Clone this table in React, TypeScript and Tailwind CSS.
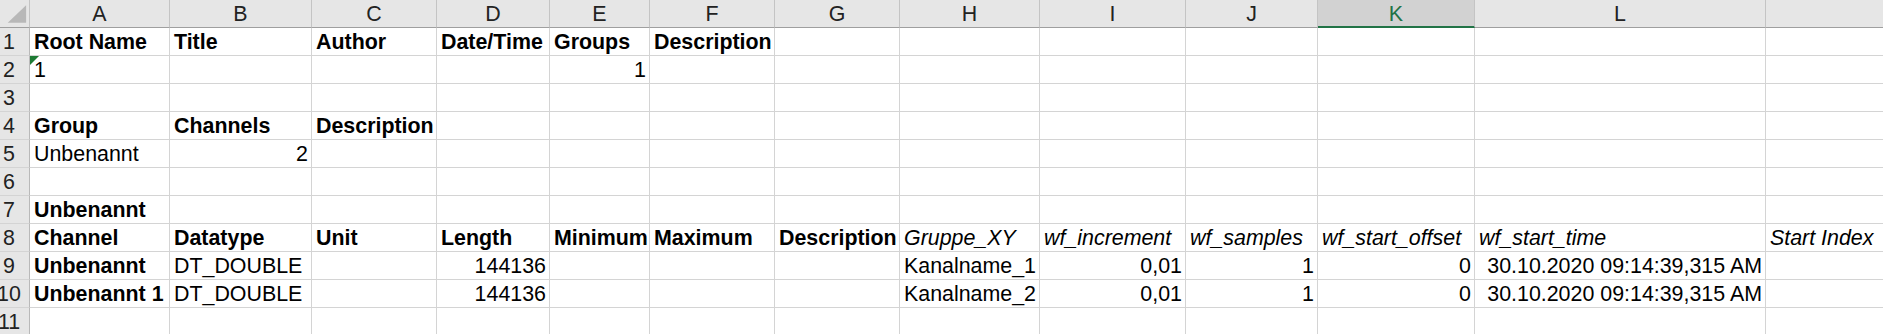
import React from "react";

type Cell = { v: string; b?: boolean; i?: boolean; r?: boolean; err?: boolean };

const letters = ["A", "B", "C", "D", "E", "F", "G", "H", "I", "J", "K", "L", "M"];
const widths = [140, 142, 125, 113, 100, 125, 125, 140, 146, 132, 157, 291, 400];

// row data, keyed by column index
const rows: Record<number, Cell>[] = [
  {
    0: { v: "Root Name", b: true },
    1: { v: "Title", b: true },
    2: { v: "Author", b: true },
    3: { v: "Date/Time", b: true },
    4: { v: "Groups", b: true },
    5: { v: "Description", b: true },
  },
  { 0: { v: "1", err: true }, 4: { v: "1", r: true } },
  {},
  {
    0: { v: "Group", b: true },
    1: { v: "Channels", b: true },
    2: { v: "Description", b: true },
  },
  { 0: { v: "Unbenannt" }, 1: { v: "2", r: true } },
  {},
  { 0: { v: "Unbenannt", b: true } },
  {
    0: { v: "Channel", b: true },
    1: { v: "Datatype", b: true },
    2: { v: "Unit", b: true },
    3: { v: "Length", b: true },
    4: { v: "Minimum", b: true },
    5: { v: "Maximum", b: true },
    6: { v: "Description", b: true },
    7: { v: "Gruppe_XY", i: true },
    8: { v: "wf_increment", i: true },
    9: { v: "wf_samples", i: true },
    10: { v: "wf_start_offset", i: true },
    11: { v: "wf_start_time", i: true },
    12: { v: "Start Index", i: true },
  },
  {
    0: { v: "Unbenannt", b: true },
    1: { v: "DT_DOUBLE" },
    3: { v: "144136", r: true },
    7: { v: "Kanalname_1" },
    8: { v: "0,01", r: true },
    9: { v: "1", r: true },
    10: { v: "0", r: true },
    11: { v: "30.10.2020 09:14:39,315 AM", r: true },
  },
  {
    0: { v: "Unbenannt 1", b: true },
    1: { v: "DT_DOUBLE" },
    3: { v: "144136", r: true },
    7: { v: "Kanalname_2" },
    8: { v: "0,01", r: true },
    9: { v: "1", r: true },
    10: { v: "0", r: true },
    11: { v: "30.10.2020 09:14:39,315 AM", r: true },
  },
  {},
];

export default function App() {
  return (
    <div className="w-[1883px] h-[334px] overflow-hidden bg-white font-['Liberation_Sans',Arial,sans-serif] text-[21.4px] text-black">
      {/* Spaltenköpfe */}
      <div className="flex h-[28px]">
        <div className="w-[30px] shrink-0 bg-[#e6e6e6] border-r border-b border-r-[#c4c4c4] border-b-[#9f9f9f] flex items-end justify-end">
          <svg width="30" height="27" viewBox="0 0 30 27" className="block">
            <polygon points="27,5 27,23 8,23" fill="#b8b8b8" />
          </svg>
        </div>
        {letters.map((l, c) => {
          const sel = l === "K";
          return (
            <div
              key={l}
              style={{ width: widths[c] }}
              className={
                sel
                  ? "shrink-0 bg-[#d2d2d2] border-r border-r-[#c4c4c4] border-b-2 border-b-[#217346] text-[#217346] text-center pt-[1px] leading-[26px]"
                  : "shrink-0 bg-[#e6e6e6] border-r border-r-[#c4c4c4] border-b border-b-[#9f9f9f] text-[#222] text-center pt-[1px] leading-[26px]"
              }
            >
              {l}
            </div>
          );
        })}
      </div>

      {rows.map((row, r) => (
        <div key={r} className="flex h-[28px]">
          <div className="w-[30px] shrink-0 overflow-hidden bg-[#e6e6e6] border-r border-b border-r-[#b9b9b9] border-b-[#d4d4d4]">
            <div className="w-[40px] -ml-[11px] text-center text-[#222] pt-[1px] leading-[26px]">{r + 1}</div>
          </div>
          {widths.map((w, c) => {
            const cell = row[c];
            return (
              <div
                key={c}
                style={{ width: w }}
                className={
                  "relative shrink-0 whitespace-nowrap border-r border-b border-[#d4d4d4] pt-[1px] leading-[26px] " +
                  (cell?.r ? "text-right pr-[3px] " : "pl-[4px] ") +
                  (cell?.b ? "font-bold " : "") +
                  (cell?.i ? "italic " : "")
                }
              >
                {cell?.err && (
                  <svg width="9" height="9" viewBox="0 0 9 9" className="absolute left-0 top-0">
                    <polygon points="0,0 9,0 0,9" fill="#1e7b34" />
                  </svg>
                )}
                {cell?.v}
              </div>
            );
          })}
        </div>
      ))}
    </div>
  );
}
